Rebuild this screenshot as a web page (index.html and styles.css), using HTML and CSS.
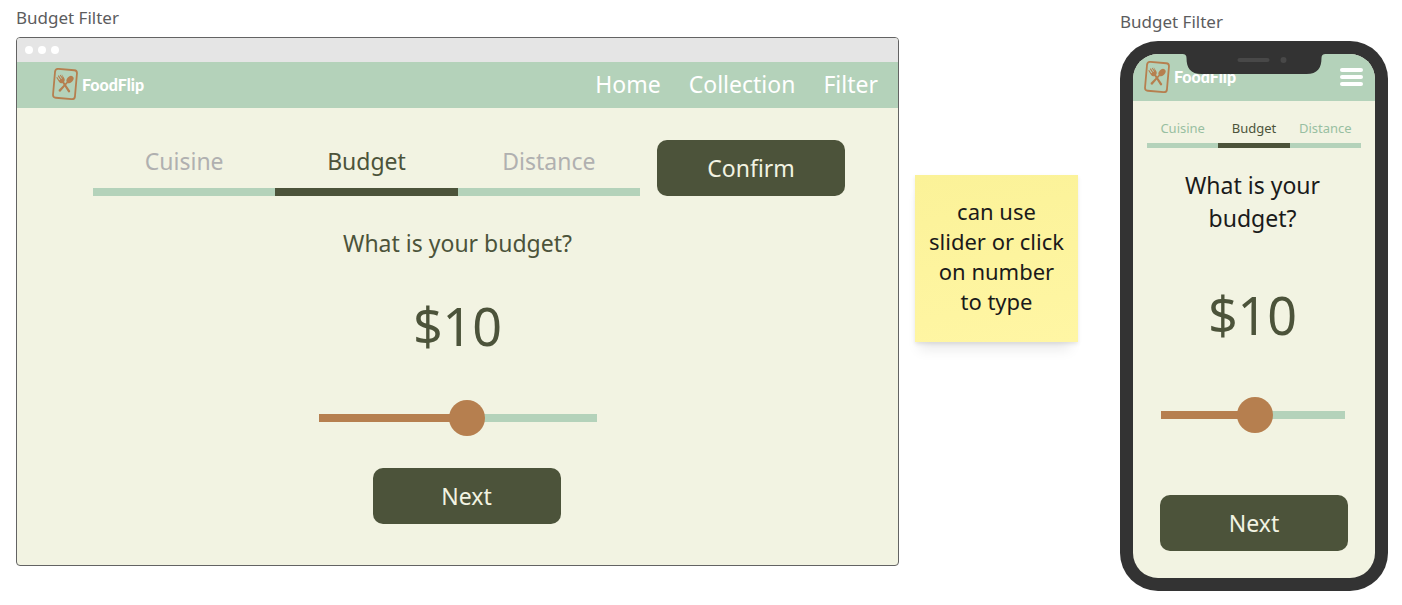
FILE: index.html
```html
<!DOCTYPE html>
<html lang="en">
<head>
<meta charset="utf-8">
<meta name="viewport" content="width=device-width, initial-scale=1">
<title>Budget Filter</title>
<link rel="stylesheet" href="styles.css">
</head>
<body>
<svg class="symbols" aria-hidden="true">
  <symbol id="logo-mark" viewBox="0 0 28 32">
    <g transform="rotate(5 14 16)">
      <rect x="3" y="1.500" width="22" height="29" rx="3" fill="none" stroke="#b67f4f" stroke-width="1.800"/>
      <g transform="translate(14 17) rotate(-38)" fill="#b67f4f">
        <path d="M-3.200-11h1.100v4h1.100v-4.500h1.100v4.500H1v-4h1.100v4l1.100-4V-6Q3-3.500 1-3L1.200 8Q0 9.500-1.200 8L-1-3Q-3.200-3.500-3.200-6Z"/>
      </g>
      <g transform="translate(14 17) rotate(38)" fill="#b67f4f">
        <ellipse cx="0" cy="-7.500" rx="3" ry="4"/>
        <path d="M-.8-4H.8L1.200 8Q0 9.500-1.200 8Z"/>
      </g>
    </g>
  </symbol>
</svg>

<main class="board">
  <section class="frame frame-desktop">
    <h2 class="frame-label">Budget Filter</h2>
    <div class="browser">
      <div class="browser-bar"><span class="dot"></span><span class="dot"></span><span class="dot"></span></div>
      <header class="site-header">
        <a class="logo" href="#"><svg class="logo-mark" aria-hidden="true"><use href="#logo-mark"/></svg><span>FoodFlip</span></a>
        <nav class="site-nav">
          <a href="#">Home</a>
          <a href="#">Collection</a>
          <a href="#">Filter</a>
        </nav>
      </header>
      <div class="desktop-content">
        <div class="filter-row">
          <div class="tabs">
            <button class="tab" type="button">Cuisine</button>
            <button class="tab tab-active" type="button">Budget</button>
            <button class="tab" type="button">Distance</button>
          </div>
          <button class="button" type="button">Confirm</button>
        </div>
        <div class="budget-form">
          <label class="question" for="budget">What is your budget?</label>
          <input class="amount" id="budget" type="text" value="$10">
          <input class="slider" type="range" min="0" max="100" value="54" aria-label="Budget">
        </div>
        <div class="actions"><button class="button" type="button">Next</button></div>
      </div>
    </div>
  </section>

  <aside class="note">can use slider or click on number to type</aside>

  <section class="frame frame-phone">
    <h2 class="frame-label">Budget Filter</h2>
    <div class="phone">
      <div class="screen">
        <svg class="notch" viewBox="0 0 143 20" aria-hidden="true">
          <path d="M0 0H143Q139 0 139 4C139 14 135 20 124 20H19C8 20 4 14 4 4Q4 0 0 0Z" fill="#333"/>
          <rect x="55" y="4" width="32" height="4" rx="2" fill="#484848"/>
          <circle cx="101" cy="6" r="3" fill="#484848"/>
        </svg>
        <header class="site-header phone-header">
          <a class="logo" href="#"><svg class="logo-mark" aria-hidden="true"><use href="#logo-mark"/></svg><span>FoodFlip</span></a>
          <button class="menu" type="button" aria-label="Menu"><span></span><span></span><span></span></button>
        </header>
        <div class="phone-content">
          <div class="tabs">
            <button class="tab" type="button">Cuisine</button>
            <button class="tab tab-active" type="button">Budget</button>
            <button class="tab" type="button">Distance</button>
          </div>
          <div class="budget-form">
            <label class="question" for="phone-budget">What is your budget?</label>
            <input class="amount" id="phone-budget" type="text" value="$10">
            <input class="slider" type="range" min="0" max="100" value="52" aria-label="Budget">
          </div>
          <button class="button" type="button">Next</button>
        </div>
      </div>
    </div>
  </section>
</main>
</body>
</html>
```

FILE: styles.css
```css
:root {
  --mint: #b4d2ba;
  --cream: #f2f3e2;
  --olive: #4c533a;
  --clay: #b67f4f;
}

* { box-sizing: border-box; }

body {
  margin: 0;
  background: #fff;
  font-family: "Noto Sans", sans-serif;
}

button, input { font: inherit; }

button {
  border: 0;
  padding: 0;
  cursor: pointer;
}

a { color: inherit; text-decoration: none; }

.symbols { position: absolute; width: 0; height: 0; }

.board {
  display: flex;
  align-items: start;
  padding: 6px 14px 14px 16px;
}

.frame-desktop { flex: 1; }

.frame-label {
  margin: 0 0 7px;
  font-size: 17px;
  line-height: 24px;
  font-weight: 400;
  color: #5c5c5e;
}

.browser {
  border: 1px solid #636363;
  border-radius: 4px;
  overflow: hidden;
  background: var(--cream);
}

.browser-bar {
  display: flex;
  align-items: center;
  gap: 5px;
  height: 24px;
  padding-left: 8px;
  background: #e5e5e5;
}

.dot {
  width: 8px;
  height: 8px;
  border-radius: 50%;
  background: #fff;
}

.site-header {
  display: flex;
  align-items: center;
  justify-content: space-between;
  height: 46px;
  padding: 0 20px 2px 34px;
  background: var(--mint);
  color: #fff;
}

.logo {
  display: flex;
  align-items: center;
  gap: 3px;
  font-family: Lato, sans-serif;
  font-size: 16px;
  font-weight: 900;
}

.logo-mark { width: 28px; height: 32px; }

.site-nav {
  display: flex;
  gap: 28px;
  font-size: 23px;
  line-height: 32px;
}

.desktop-content {
  display: flex;
  flex-direction: column;
  align-items: center;
  padding: 32px 53px 41px 76px;
}

.filter-row {
  display: flex;
  align-items: end;
  gap: 17px;
  width: 100%;
}

.tabs {
  display: grid;
  grid-template-columns: repeat(3, 1fr);
  flex: 1;
}

.tab {
  padding-bottom: 11px;
  border-bottom: 8px solid var(--mint);
  background: none;
  color: #b0b0b0;
  font-size: 23px;
  line-height: 32px;
}

.tab-active {
  border-color: var(--olive);
  color: var(--olive);
}

.button {
  width: 188px;
  height: 56px;
  border-radius: 10px;
  background: var(--olive);
  color: var(--cream);
  font-size: 23px;
}

.budget-form {
  display: flex;
  flex-direction: column;
  align-items: center;
}

.desktop-content .budget-form { padding-right: 23px; }

.question {
  margin-top: 31px;
  color: var(--olive);
  font-size: 23px;
  line-height: 33px;
  text-align: center;
}

.amount {
  width: 160px;
  height: 72px;
  margin-top: 30px;
  padding: 0;
  border: 0;
  background: none;
  color: var(--olive);
  font-size: 52px;
  line-height: 72px;
  text-align: center;
}

.slider {
  appearance: none;
  width: 278px;
  height: 36px;
  margin: 38px 0 0;
  background: none;
}

.slider::-webkit-slider-runnable-track {
  height: 8px;
  background: linear-gradient(to right, var(--clay) 52%, var(--mint) 52%);
}

.slider::-webkit-slider-thumb {
  appearance: none;
  width: 36px;
  height: 36px;
  margin-top: -14px;
  border-radius: 50%;
  background: var(--clay);
}

.actions {
  margin-top: 32px;
  padding-right: 5px;
}

.note {
  display: flex;
  align-items: center;
  justify-content: center;
  width: 163px;
  min-height: 167px;
  margin: 169px 42px 0 16px;
  padding: 0 14px 6px;
  background: linear-gradient(170deg, #fbf298, #fff6a4);
  box-shadow: -2px 14px 12px -6px #00000014, 0 2px 4px #00000018;
  color: #1a1a1a;
  font-size: 22px;
  line-height: 30px;
  text-align: center;
}

.frame-phone {
  width: 268px;
  padding-top: 4px;
}

.phone {
  padding: 13px;
  border-radius: 38px;
  background: #333;
}

.screen {
  position: relative;
  overflow: hidden;
  border-radius: 25px;
  background: var(--cream);
}

.notch {
  position: absolute;
  top: 0;
  left: 50%;
  width: 143px;
  height: 20px;
  transform: translateX(-50%);
}

.phone-header {
  height: 47px;
  padding: 0 12px 2px 10px;
}

.menu {
  display: grid;
  gap: 3px;
  width: 23px;
  background: none;
}

.menu span {
  height: 4px;
  border-radius: 2px;
  background: #fff;
}

.phone-content {
  display: flex;
  flex-direction: column;
  align-items: center;
  padding: 18px 14px 27px;
}

.phone-content .tabs { flex: none; width: 100%; }

.phone-content .tab {
  padding-bottom: 6px;
  border-bottom-width: 5px;
  font-size: 13px;
  line-height: 18px;
}

.phone-content .tab:not(.tab-active) { color: #98bfa1; }

.phone-content .budget-form { padding-right: 3px; }

.phone-content .question {
  width: 160px;
  margin-top: 21px;
  color: #1a1a1a;
}

.phone-content .amount { margin-top: 44px; }

.phone-content .slider {
  width: 184px;
  margin-top: 46px;
}

.phone-content .button { margin-top: 62px; }
```
